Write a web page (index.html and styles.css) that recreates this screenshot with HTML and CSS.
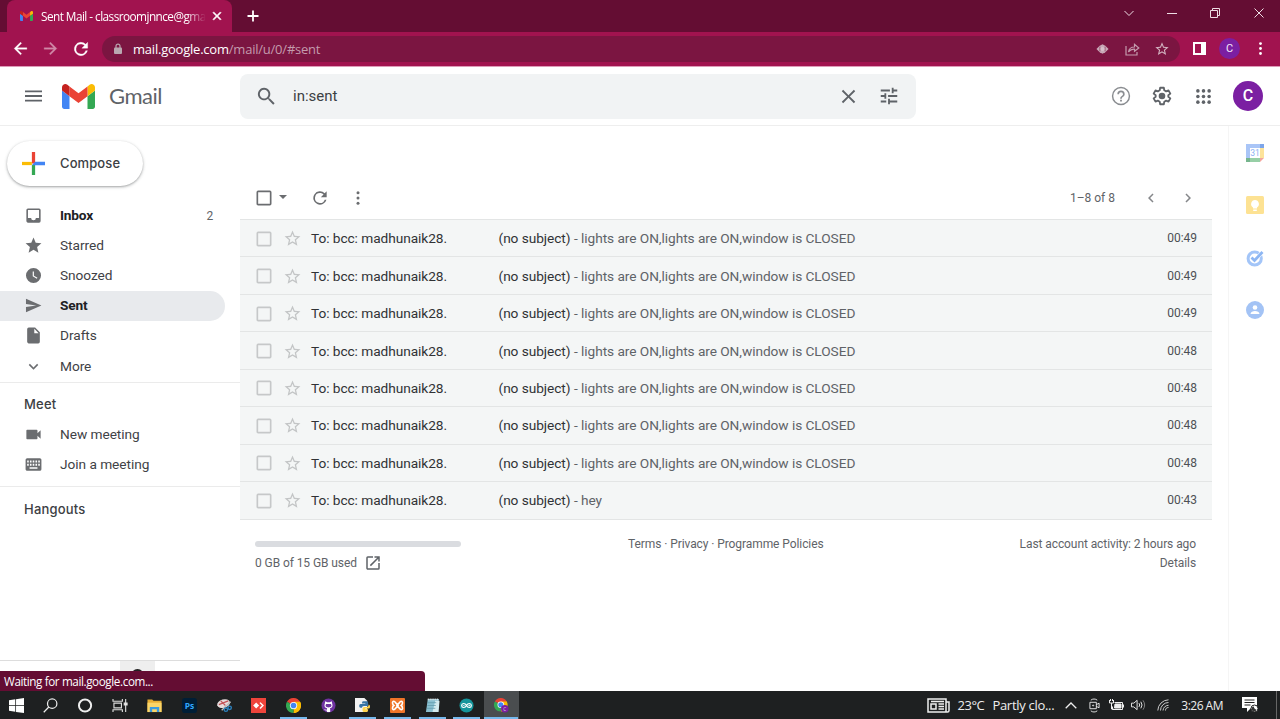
FILE: index.html
```html
<!DOCTYPE html>
<html lang="en">
<head>
<meta charset="utf-8">
<title>Sent Mail</title>
<link rel="stylesheet" href="styles.css">
</head>
<body>
<svg class="defs" aria-hidden="true">
  <symbol id="gmail" viewBox="52 42 88 66">
    <path fill="#4285f4" d="M58 108h14V74L52 59v43c0 3.300 2.700 6 6 6"/>
    <path fill="#34a853" d="M120 108h14c3.300 0 6-2.700 6-6V59l-20 15"/>
    <path fill="#fbbc04" d="M120 48v26l20-15v-8c0-7.400-8.500-11.700-14.400-7.200"/>
    <path fill="#ea4335" d="M72 74V48l24 18 24-18v26L96 92"/>
    <path fill="#c5221f" d="M52 51v8l20 15V48l-5.600-4.200C60.500 39.300 52 43.600 52 51"/>
  </symbol>
  <symbol id="close" viewBox="0 0 24 24"><path d="M19 6.400 17.600 5 12 10.600 6.400 5 5 6.400 10.600 12 5 17.600 6.400 19l5.600-5.600 5.600 5.600 1.400-1.400-5.600-5.600z"/></symbol>
  <symbol id="back" viewBox="0 0 24 24"><path d="M20 11H7.800l5.600-5.600L12 4l-8 8 8 8 1.400-1.400L7.800 13H20z"/></symbol>
  <symbol id="reload" viewBox="0 0 24 24"><path d="M17.650 6.350A8 8 0 1 0 19.730 14h-2.080A6 6 0 1 1 12 6c1.660 0 3.140.69 4.220 1.780L13 11h7V4z"/></symbol>
  <symbol id="star" viewBox="0 0 24 24"><path d="M22 9.240l-7.190-.62L12 2 9.190 8.630 2 9.240l5.460 4.730L5.820 21 12 17.270 18.180 21l-1.630-7.030zM12 15.400l-3.760 2.270 1-4.280-3.320-2.880 4.380-.38L12 6.100l1.710 4.040 4.380.38-3.320 2.880 1 4.280z"/></symbol>
  <symbol id="search" viewBox="0 0 24 24"><path d="M15.500 14h-.79l-.28-.27A6.500 6.500 0 1 0 13.730 14.430l.27.280v.79l5 4.990L20.490 19zm-6 0a4.500 4.500 0 1 1 0-9 4.500 4.500 0 0 1 0 9"/></symbol>
  <symbol id="more" viewBox="0 0 24 24"><circle cx="12" cy="5" r="2"/><circle cx="12" cy="12" r="2"/><circle cx="12" cy="19" r="2"/></symbol>
  <symbol id="left" viewBox="0 0 24 24"><path d="M15.400 7.400 14 6l-6 6 6 6 1.400-1.400L10.800 12z"/></symbol>
  <symbol id="down" viewBox="0 0 24 24"><path d="M16.600 8.600 12 13.200 7.400 8.600 6 10l6 6 6-6z"/></symbol>
  <symbol id="box" viewBox="0 0 24 24"><path d="M19 5v14H5V5zm0-2H5a2 2 0 0 0-2 2v14c0 1.100.9 2 2 2h14a2 2 0 0 0 2-2V5a2 2 0 0 0-2-2"/></symbol>
  <symbol id="chrome" viewBox="0 0 24 24">
    <path fill="#ea4335" d="M12 12 1.600 6A12 12 0 0 1 22.400 6z"/>
    <path fill="#fbbc04" d="M12 12 22.400 6A12 12 0 0 1 12 24z"/>
    <path fill="#34a853" d="M12 12v12A12 12 0 0 1 1.600 6z"/>
    <path fill="#fbbc04" d="M12 6h10.400A12 12 0 0 1 12 24l5-9z"/>
    <circle cx="12" cy="12" r="5.800" fill="#fff"/><circle cx="12" cy="12" r="4.500" fill="#4285f4"/>
  </symbol>
</svg>

<div class="screen">
  <header class="tabstrip">
    <div class="tab">
      <svg class="fav"><use href="#gmail"/></svg>
      <span class="tab-title">Sent Mail - classroomjnnce@gma</span>
      <svg class="tab-close"><use href="#close"/></svg>
    </div>
    <svg class="newtab" viewBox="0 0 12 12"><path d="M6 .5v11M.5 6h11" stroke="#fff" stroke-width="1.800"/></svg>
    <div class="winctl">
      <svg viewBox="0 0 12 12"><path d="M1.500 4 6 8.500 10.500 4"/></svg>
      <svg viewBox="0 0 12 12"><path d="M1 6.500h10"/></svg>
      <svg viewBox="0 0 12 12"><path d="M1.500 3.500h7v7h-7zM3.500 3.500v-2h7v7h-2"/></svg>
      <svg viewBox="0 0 12 12"><path d="m1.500 1.500 9 9m0-9-9 9"/></svg>
    </div>
  </header>

  <div class="navbar">
    <svg class="nav"><use href="#back"/></svg>
    <svg class="nav fwd"><use href="#back"/></svg>
    <svg class="nav rel"><use href="#reload"/></svg>
    <div class="omni">
      <svg class="lock" viewBox="0 0 8 12"><path d="M2 5V3.200a2 2 0 0 1 4 0V5" fill="none" stroke="#b9a8b0" stroke-width="1.200"/><rect y="4.500" width="8" height="6.500" rx="1" fill="#b9a8b0"/></svg>
      <span class="url"><b>mail.google.com</b>/mail/u/0/#sent</span>
      <svg class="eye" viewBox="0 0 14 12"><path d="M.5 6 4 2.500 7 .8l3 1.700L13.500 6 10 9.500l-3 1.700-3-1.700z" fill="#c9a9b7"/><path d="M4.200 3.500v5M9.800 3.500v5" stroke="#7b1541" stroke-width=".6"/><circle cx="7" cy="6" r="2.200" fill="#d8c0cb"/></svg>
      <svg class="share" viewBox="0 0 15 14"><path d="M1 4v9h11v-3M3.500 10c.5-3.500 2.500-5 6-5V2.300L13.800 6 9.500 9.300V7.200C7 7 5 8 3.500 10z" fill="none" stroke="#c49bad" stroke-width="1.200"/></svg>
      <svg class="ostar"><use href="#star"/></svg>
    </div>
    <svg class="panel" viewBox="0 0 13 13"><path d="M1 1h11v11H1z" fill="none" stroke="#fff" stroke-width="2"/><path d="M8 1h4v11H8z" fill="#fff"/></svg>
    <span class="mini">C</span>
    <svg class="kebab"><use href="#more"/></svg>
  </div>

  <div class="gheader">
    <svg class="burger" viewBox="0 0 18 12"><path d="M0 1h18M0 6h18M0 11h18" stroke="#5f6368" stroke-width="1.900"/></svg>
    <svg class="logo"><use href="#gmail"/></svg>
    <span class="word">Gmail</span>
    <div class="search">
      <svg class="mag"><use href="#search"/></svg>
      <span class="query">in:sent</span>
      <svg class="clear"><use href="#close"/></svg>
      <svg class="tune" viewBox="0 0 24 24"><path d="M3 17v2h6v-2zM3 5v2h10V5zm10 16v-2h8v-2h-8v-2h-2v6zM7 9v2H3v2h4v2h2V9zm14 4v-2H11v2zm-6-4h2V7h4V5h-4V3h-2z"/></svg>
    </div>
    <svg class="help" viewBox="0 0 24 24"><path d="M11 18h2v-2h-2zm1-16a10 10 0 1 0 0 20 10 10 0 0 0 0-20m0 18.400a8.400 8.400 0 1 1 0-16.800 8.400 8.400 0 0 1 0 16.800M12 6a4 4 0 0 0-4 4h1.800a2.200 2.200 0 0 1 4.400 0c0 2-3.100 1.800-3.100 5h1.800c0-2.200 3.100-2.500 3.100-5a4 4 0 0 0-4-4"/></svg>
    <svg class="gear" viewBox="0 0 24 24"><path fill="none" stroke="#5f6368" stroke-width="2" stroke-linejoin="round" d="M10 3h4l.5 2.800 2 1.100 2.600-1 2 3.500-2.200 1.700v1.800l2.200 1.700-2 3.500-2.600-1-2 1.100L14 21h-4l-.5-2.800-2-1.100-2.600 1-2-3.500 2.200-1.700v-1.800L2.900 9.400l2-3.500 2.600 1 2-1.100z"/><circle cx="12" cy="12" r="3.600"/></svg>
    <svg class="apps" viewBox="0 0 16 16"><circle cx="2" cy="2" r="1.900"/><circle cx="8" cy="2" r="1.900"/><circle cx="14" cy="2" r="1.900"/><circle cx="2" cy="8" r="1.900"/><circle cx="8" cy="8" r="1.900"/><circle cx="14" cy="8" r="1.900"/><circle cx="2" cy="14" r="1.900"/><circle cx="8" cy="14" r="1.900"/><circle cx="14" cy="14" r="1.900"/></svg>
    <span class="avatar">C</span>
  </div>

  <div class="body">
    <aside class="side">
      <div class="compose">
        <svg viewBox="0 0 24 24"><path fill="#ea4335" d="M10.300 0h3.400v12h-3.400z"/><path fill="#fbbc04" d="M0 10.300h10.300v3.400H0z"/><path fill="#34a853" d="M10.300 13.700 13.700 12v12h-3.400z"/><path fill="#4285f4" d="M13.700 10.300H24v3.400H10.300z"/></svg>
        <span>Compose</span>
      </div>
      <nav class="folders">
        <div class="item bold"><svg viewBox="0 0 24 24"><path d="M19 3H5a2 2 0 0 0-2 2v14c0 1.100.9 2 2 2h14a2 2 0 0 0 2-2V5a2 2 0 0 0-2-2m0 12h-4a3 3 0 0 1-6 0H5V5h14z"/></svg><span>Inbox</span><i>2</i></div>
        <div class="item"><svg viewBox="0 0 24 24"><path d="M12 17.270 18.180 21l-1.640-7.030L22 9.240l-7.190-.61L12 2 9.190 8.630 2 9.240l5.460 4.730L5.820 21z"/></svg><span>Starred</span></div>
        <div class="item"><svg viewBox="0 0 24 24"><path d="M12 2.500a9.500 9.500 0 1 0 0 19 9.500 9.500 0 0 0 0-19m4.200 13.700L11 13V7h1.500v5.200l4.500 2.700z"/></svg><span>Snoozed</span></div>
        <div class="item bold active"><svg viewBox="0 0 24 24"><path d="M2.500 20.500 22 12 2.500 3.500V10l13 2-13 2z"/></svg><span>Sent</span></div>
        <div class="item"><svg viewBox="0 0 24 24"><path d="M14 2H6a2 2 0 0 0-2 2v16c0 1.100.9 2 2 2h12a2 2 0 0 0 2-2V8zm-1 7V3.500L18.500 9z"/></svg><span>Drafts</span></div>
        <div class="item last"><svg><use href="#down"/></svg><span>More</span></div>
      </nav>
      <section class="meet">
        <h2>Meet</h2>
        <div class="item"><svg viewBox="0 0 24 24"><path d="M17 10.500V7a1 1 0 0 0-1-1H4a1 1 0 0 0-1 1v10c0 .6.400 1 1 1h12a1 1 0 0 0 1-1v-3.500l4 4v-11z"/></svg><span>New meeting</span></div>
        <div class="item"><svg viewBox="0 0 24 24"><path d="M20 4H4a2 2 0 0 0-2 2v12c0 1.100.9 2 2 2h16a2 2 0 0 0 2-2V6a2 2 0 0 0-2-2"/><path fill="#fff" d="M4 7h2v2.500H4zm3.500 0h2v2.500h-2zM11 7h2v2.500h-2zm3.500 0h2v2.500h-2zM18 7h2v2.500h-2zM4 11h2v2.500H4zm3.500 0h2v2.500h-2zM11 11h2v2.500h-2zm3.500 0h2v2.500h-2zM18 11h2v2.500h-2zM7 15.500h10v2H7z"/></svg><span>Join a meeting</span></div>
      </section>
      <section class="hang"><h2>Hangouts</h2></section>
      <div class="dock"><span class="dock-tab"><i></i></span></div>
    </aside>

    <main class="main">
      <div class="toolbar">
        <svg class="selall"><use href="#box"/></svg>
        <span class="caret"></span>
        <svg class="refresh"><use href="#reload"/></svg>
        <svg class="opts"><use href="#more"/></svg>
        <span class="count">1–8 of 8</span>
        <svg class="pg"><use href="#left"/></svg>
        <svg class="pg next"><use href="#left"/></svg>
      </div>
      <div class="list">
        <div class="row"><svg class="cb"><use href="#box"/></svg><svg class="st"><use href="#star"/></svg><span class="to">To: bcc: madhunaik28.</span><span class="subj">(no subject)</span><span class="snip">- lights are ON,lights are ON,window is CLOSED</span><time>00:49</time></div>
        <div class="row"><svg class="cb"><use href="#box"/></svg><svg class="st"><use href="#star"/></svg><span class="to">To: bcc: madhunaik28.</span><span class="subj">(no subject)</span><span class="snip">- lights are ON,lights are ON,window is CLOSED</span><time>00:49</time></div>
        <div class="row"><svg class="cb"><use href="#box"/></svg><svg class="st"><use href="#star"/></svg><span class="to">To: bcc: madhunaik28.</span><span class="subj">(no subject)</span><span class="snip">- lights are ON,lights are ON,window is CLOSED</span><time>00:49</time></div>
        <div class="row"><svg class="cb"><use href="#box"/></svg><svg class="st"><use href="#star"/></svg><span class="to">To: bcc: madhunaik28.</span><span class="subj">(no subject)</span><span class="snip">- lights are ON,lights are ON,window is CLOSED</span><time>00:48</time></div>
        <div class="row"><svg class="cb"><use href="#box"/></svg><svg class="st"><use href="#star"/></svg><span class="to">To: bcc: madhunaik28.</span><span class="subj">(no subject)</span><span class="snip">- lights are ON,lights are ON,window is CLOSED</span><time>00:48</time></div>
        <div class="row"><svg class="cb"><use href="#box"/></svg><svg class="st"><use href="#star"/></svg><span class="to">To: bcc: madhunaik28.</span><span class="subj">(no subject)</span><span class="snip">- lights are ON,lights are ON,window is CLOSED</span><time>00:48</time></div>
        <div class="row"><svg class="cb"><use href="#box"/></svg><svg class="st"><use href="#star"/></svg><span class="to">To: bcc: madhunaik28.</span><span class="subj">(no subject)</span><span class="snip">- lights are ON,lights are ON,window is CLOSED</span><time>00:48</time></div>
        <div class="row"><svg class="cb"><use href="#box"/></svg><svg class="st"><use href="#star"/></svg><span class="to">To: bcc: madhunaik28.</span><span class="subj">(no subject)</span><span class="snip">- hey</span><time>00:43</time></div>
      </div>
      <footer class="foot">
        <div class="quota"><div class="bar"></div><div class="used"><span>0 GB of 15 GB used</span><svg viewBox="0 0 24 24"><path d="M19 19H5V5h7V3H5a2 2 0 0 0-2 2v14c0 1.100.9 2 2 2h14a2 2 0 0 0 2-2v-7h-2zM14 3v2h3.600l-9.800 9.800 1.400 1.400L19 6.400V10h2V3z"/></svg></div></div>
        <div class="terms">Terms · Privacy · Programme Policies</div>
        <div class="activity"><span>Last account activity: 2 hours ago</span><span>Details</span></div>
      </footer>
    </main>

    <aside class="rail">
      <svg viewBox="0 0 18 18"><path fill="#a9c5f7" d="M0 0h14v4H4v10H0z"/><path fill="#7da5ea" d="M14 0h4v4h-4z"/><path fill="#fde39a" d="M14 4h4v10h-4z"/><path fill="#97cfa6" d="M4 14h10v4H4z"/><path fill="#76b58d" d="M0 14h4v4H0z"/><path fill="#f3a59e" d="M14 14h4l-4 4z"/><text x="9" y="12.300" text-anchor="middle" font-size="8.500" fill="#8bb1f3">31</text></svg>
      <svg viewBox="0 0 18 18"><rect width="18" height="18" rx="1.500" fill="#fde293"/><path fill="#fff" d="M9 4a4 4 0 0 0-2 7.400V12.500h4v-1.100A4 4 0 0 0 9 4M7.200 13.500h3.600V15H7.200z"/></svg>
      <svg viewBox="0 0 18 18"><circle cx="8.700" cy="9.500" r="6.600" fill="none" stroke="#a3c5f8" stroke-width="3"/><path d="m5.500 8.500 3 3L16.500 3" fill="none" stroke="#fff" stroke-width="3.800"/><path d="m5.500 8.500 3 3L16.500 3" fill="none" stroke="#8db6f3" stroke-width="2.800"/></svg>
      <svg viewBox="0 0 18 18"><circle cx="9" cy="9" r="9" fill="#a3c3f5"/><circle cx="9" cy="6.500" r="2.300" fill="#fff"/><path fill="#fff" d="M4.500 13c0-4 9-4 9 0z"/></svg>
    </aside>
  </div>

  <div class="status">Waiting for mail.google.com...</div>

  <div class="taskbar">
    <div class="pins">
      <span><svg viewBox="0 0 16 16"><path fill="#fff" d="M0 2.300 6.700 1.300v6.300H0zM7.500 1.200 16 0v7.600H7.500zM0 8.400h6.700v6.300L0 13.700zM7.500 8.400H16V16l-8.500-1.200z"/></svg></span>
      <span><svg viewBox="0 0 16 16" fill="none" stroke="#eee" stroke-width="1.300"><circle cx="9.800" cy="6" r="5"/><path d="M6.200 9.600.8 15.200"/></svg></span>
      <span><svg viewBox="0 0 16 16"><circle cx="7.500" cy="8" r="6.500" fill="none" stroke="#eee" stroke-width="2.100"/></svg></span>
      <span><svg viewBox="0 0 16 16" fill="none" stroke="#ddd" stroke-width="1.200"><path d="M0 1v2.500h10V1M0 15v-2.500h10V15M1 5.500h8v5H1zM13.500 1v14"/><path d="M12 5.500h3v2h-3z" fill="#fff"/></svg></span>
      <span><svg viewBox="0 0 16 16"><path fill="#e8ae35" d="M.5 1.500h5L7 3h8.500v12H.5z"/><path fill="#fbd568" d="M.5 5h15v10H.5z"/><path fill="#3b9be0" d="M3 15V9.500h10V15h-2.500v-3h-5v3z"/></svg></span>
      <span><svg viewBox="0 0 16 16"><rect width="16" height="16" rx="3" fill="#001e36"/><text x="8" y="11.300" text-anchor="middle" font-size="9" font-weight="700" fill="#31a8ff">Ps</text></svg></span>
      <span><svg viewBox="0 0 16 16"><ellipse cx="7" cy="6" rx="7" ry="4.500" fill="#e7dcdc" transform="rotate(-15 7 6)"/><path d="m2 7 10-4M4 3l5 5" stroke="#c55358" stroke-width="1.300"/><path d="M5 13 14.500 4" stroke="#bbb" stroke-width="1.500"/><circle cx="9.500" cy="12.500" r="1.800" fill="none" stroke="#2c80bd" stroke-width="1.500"/><circle cx="13.500" cy="10.500" r="1.800" fill="none" stroke="#2c80bd" stroke-width="1.500"/></svg></span>
      <span><svg viewBox="0 0 16 16"><path fill="#ef443b" d="M0 0h16v16H0z"/><path fill="#fff" d="M5.500 4.800 8.700 8l-3.200 3.200L2.300 8zM9 5.300l1.200-.9L13.800 8l-3.600 3.600-1.200-.9L11.700 8z"/></svg></span>
      <span class="open"><svg><use href="#chrome"/></svg></span>
      <span><svg viewBox="0 0 16 16"><circle cx="8" cy="8" r="7.500" fill="#6f32a0"/><path fill="#fff" d="M4.500 3.500 6.600 4.500h2.800l2.100-1 .4 2.300c1 2.500 0 4.700-2.400 5.200l.3 1V15H6.300v-1.700c-1.700.2-2-.7-3-1.600 1.300-.1 1.500 1.200 3 .7l.2-1.400C4.100 10.500 3.100 8.300 4.100 5.800z"/><path fill="#6f32a0" d="M5.500 6.500h5c1.500 2 .5 3.500-2.500 3.500s-4-1.500-2.500-3.500"/></svg></span>
      <span class="open"><svg viewBox="0 0 16 16"><path fill="#f3f3f3" d="M0 0h10l3 3v12H0z"/><path fill="#3874a5" d="M9 3.500h3.500c1.500 0 1.500 1 1.500 2v3H9.500c-1.500 0-2 1-2 2H6c-2 0-2-4 0-4h5v-.7H7.500C7.500 4 8 3.500 9 3.500"/><path fill="#ffd44c" d="M14.500 6.800c2 0 2 4.500 0 4.500h-3.700v.7H14c0 2.500-.5 3-3 3s-3-.5-3-2.500c0-2 .5-3 2-3h2.500c1.500 0 2-1 2-2.700"/></svg></span>
      <span class="open"><svg viewBox="0 0 16 16"><rect width="16" height="16" rx="1" fill="#ef7529"/><path d="M4 3.500c2 0 2 3 4 3s2-3 4-3 1.500 3.500 0 4.500c1.500 1 2 4.500 0 4.500s-2-3-4-3-2 3-4 3-1.500-3.500 0-4.500c-1.500-1-2-4.500 0-4.500M6.500 8h3" fill="none" stroke="#fff" stroke-width="1.700"/></svg></span>
      <span class="open"><svg viewBox="0 0 16 16"><path fill="#89bfd0" d="M3 1h12l-2 14H1z"/><path fill="#d4ebef" d="M11 3h4.500l-1 12H8z"/><path d="M3 5h9M2.500 8h9M2 11h9" stroke="#609aaa" stroke-width=".8"/><path d="M3 1.500h12" stroke="#eee" stroke-width="2" stroke-dasharray="1"/></svg></span>
      <span class="open"><svg viewBox="0 0 16 16"><circle cx="8" cy="8" r="7.500" fill="#15959b"/><path d="M8 8C6.500 5 2.800 5.300 2.800 8S6.500 11 8 8s5.200-2.700 5.200 0S9.500 11 8 8z" fill="none" stroke="#fff" stroke-width="1.200"/><path d="M4 8h2M10 8h2m-1-1v2" stroke="#fff" stroke-width=".7"/></svg></span>
      <span class="open current"><svg viewBox="0 0 16 16"><use href="#chrome" width="14.500" height="14.500"/><circle cx="11.500" cy="11.500" r="4" fill="#7b1fa2"/><text x="11.500" y="13.500" text-anchor="middle" font-size="5" fill="#ddd">C</text></svg></span>
    </div>
    <div class="tray">
      <svg class="news" viewBox="0 0 23 15" fill="none" stroke="#eee" stroke-width="1.500"><path d="M1 1h18v13H1zM19 4h3v8.500c0 1-.5 1.500-1.500 1.500H18M4 6h5v5H4zM11.500 6H17M11.500 8.500H17M11.500 11H17M4 3.500h13"/></svg>
      <span class="temp">23°C</span><span class="cloud">Partly clo...</span>
      <svg class="up" viewBox="0 0 12 7"><path d="M.7 6.300 6 1l5.300 5.300" fill="none" stroke="#eee" stroke-width="1.300"/></svg>
      <svg class="cam" viewBox="0 0 12 16" fill="none" stroke="#eee"><path d="M1 4.500h7v7H1zM8 7l3-1.500v5L8 9M2 2.200C4 .5 7 .5 9 2.200M2 13.800c2 1.700 5 1.700 7 0"/><circle cx="4.500" cy="8" r=".6"/></svg>
      <svg class="bat" viewBox="0 0 15 12" fill="none" stroke="#eee"><path d="M5.500 3.500h8v7h-10v-3M.5 1v3h4V1M2.500 4v6h2M1.500 0v2M3.500 0v2M14.500 5.500v3"/><path d="M6 5h6v4H5.500z" fill="#eee"/></svg>
      <svg class="vol" viewBox="0 0 16 12" fill="none" stroke="#eee"><path d="M.5 4v4H3l3.500 3V1L3 4zM8.500 4q1.500 2 0 4M10.500 2.500q2.500 3.500 0 7"/><path d="M12.800 1q3.500 5 0 10" stroke="#888"/></svg>
      <svg class="wifi" viewBox="0 0 12 12" fill="none" stroke="#ccc"><path d="M.8 11.500A11 11 0 0 1 11.500.8M3.500 11.500a8 8 0 0 1 8-8M6 11.500a5.500 5.500 0 0 1 5.500-5.200M8.500 11.500c0-2 1-3 3-3"/></svg>
      <span class="clock">3:26 AM</span>
      <svg class="note" viewBox="0 0 16 16"><path fill="#fff" d="M0 0h15v11H9l-4 4v-4H0z"/><path d="M2.500 3h10M2.500 5.500h10M2.500 8h6" stroke="#222"/><circle cx="12.500" cy="11.500" r="3.500" fill="#fff" stroke="#222"/><path d="M12 9.500a2.500 2.500 0 1 0 2.500 3A2.500 2.500 0 0 1 12 9.500" fill="#333"/></svg>
      <span class="edge"></span>
    </div>
  </div>
</div>
</body>
</html>
```
FILE: styles.css
```css
* { box-sizing: border-box; }
body { margin: 0; background: #fff; color: #202124; font-family: Roboto, "Liberation Sans", sans-serif; font-size: 13.700px; }
svg { display: block; flex: none; overflow: visible; }
span, time { white-space: nowrap; }
.defs { position: absolute; width: 0; height: 0; }
.screen { position: relative; display: flex; flex-direction: column; width: 1280px; height: 719px; overflow: hidden; }

/* Browser chrome */
.tabstrip { display: flex; align-items: center; flex: none; height: 32px; background: #640d33; font-family: "Open Sans", "Noto Sans", sans-serif; }
.tab { display: flex; align-items: center; width: 225px; height: 32px; margin-left: 7px; padding: 0 0 1px 13px; background: #a1134f; border-radius: 8px 8px 0 0; }
.fav { width: 13px; height: 10px; }
.tab-title { width: 165px; margin-left: 8px; color: #fff; font-size: 11.800px; letter-spacing: -0.550px; -webkit-mask-image: linear-gradient(90deg, #000 88%, transparent); mask-image: linear-gradient(90deg, #000 88%, transparent); }
.tab-close { width: 14px; height: 14px; margin-left: 4px; fill: #fff; stroke: #fff; }
.newtab { width: 12px; height: 12px; margin-left: 15px; }
.winctl { display: flex; gap: 31.300px; margin: -6px 15.500px 0 auto; }
.winctl svg { width: 12px; height: 12px; fill: none; stroke: #eedde5; }
.navbar { display: flex; align-items: center; flex: none; height: 34px; padding: 0 11px 1px; background: #a1134f; font-family: "Open Sans", "Noto Sans", sans-serif; }
.nav { width: 19px; height: 19px; fill: #fff; stroke: #fff; stroke-width: .4; }
.nav.fwd { margin-left: 11px; transform: scaleX(-1); opacity: .5; }
.nav.rel { width: 20px; height: 20px; margin-left: 11px; }
.omni { display: flex; align-items: center; width: 1078px; height: 26px; margin-left: 11px; padding-left: 12px; border-radius: 13px; background: #7b1541; }
.lock { width: 8px; height: 12px; }
.url { flex: 1; margin-left: 11px; color: #c49bad; font-size: 13px; letter-spacing: -0.220px; }
.url b { color: #fff; font-weight: 400; }
.eye { width: 13px; height: 12px; }
.share { width: 15px; height: 14px; margin-left: 16px; }
.ostar { width: 16px; height: 16px; margin: 0 10px 0 14px; fill: #d3b5c2; }
.panel { width: 13px; height: 13px; margin-left: 13px; }
.mini { width: 21px; height: 21px; margin-left: 13px; border-radius: 50%; background: #7b1fa2; color: #f4e8f8; font: 11px/21px Roboto, sans-serif; text-align: center; }
.kebab { width: 17px; height: 17px; margin-left: 12px; fill: #fff; }

/* Gmail header */
.gheader { display: flex; align-items: center; flex: none; height: 60px; padding-left: 25px; border-top: 1px solid #dd9bb8; border-bottom: 1px solid #eee; }
.burger { width: 17px; height: 12px; }
.logo { width: 33px; height: 25px; margin-left: 20px; }
.word { width: 131px; margin-left: 14px; color: #5f6368; font: 22px/30px Lato, sans-serif; letter-spacing: -.500px; }
.search { display: flex; align-items: center; width: 676px; height: 45px; padding-left: 15px; border-radius: 8px; background: #f1f3f4; fill: #5f6368; }
.mag { width: 23px; height: 23px; }
.query { flex: 1; margin-left: 15px; color: #3c4043; font-size: 15px; }
.clear { width: 23px; height: 23px; }
.tune { width: 22px; height: 22px; margin: 0 16px 0 18px; }
.help { width: 22px; height: 22px; margin-left: 194px; fill: #8a8d91; }
.gear { width: 22px; height: 22px; margin-left: 19px; fill: #5f6368; }
.apps { width: 15px; height: 15px; margin-left: 23px; fill: #5f6368; }
.avatar { width: 30px; height: 30px; margin-left: 22px; border-radius: 50%; background: #7b1fa2; color: #fff; font-size: 16px; font-weight: 500; line-height: 30px; text-align: center; }

/* Sidebar */
.body { display: flex; flex: none; height: 565px; }
.side { display: flex; flex-direction: column; flex: none; width: 240px; }
.compose { display: flex; align-items: center; flex: none; width: 136px; height: 45px; margin: 15px 0 15px 7px; padding-left: 15px; border-radius: 23px; box-shadow: 0 1px 2px rgba(60,64,67,.35), 0 1px 3px 1px rgba(60,64,67,.12); color: #3c4043; font: 500 13px/18px Inter, sans-serif; letter-spacing: .1px; }
.compose svg { width: 23px; height: 23px; margin-right: 15px; }
.compose span { padding-bottom: 2px; }
.folders { flex: none; height: 182px; border-bottom: 1px solid #ebebeb; }
.item { display: flex; align-items: center; width: 225px; height: 30px; padding: 0 0 1px 24px; color: #3f4246; letter-spacing: -.050px; }
.item span { padding-bottom: 1px; }
.item svg { width: 19px; height: 19px; margin-right: 17px; fill: #6b6d70; }
.item i { margin: 1px 12px 0 auto; color: #5f6368; font-size: 12px; font-style: normal; font-weight: 400; }
.item.bold { color: #202124; font-weight: 700; letter-spacing: -.200px; }
.item.active { border-radius: 0 15px 15px 0; background: #e8eaed; }
.item.last { margin-top: 1px; }
h2 { margin: 0; padding-left: 24px; color: #3c4043; font: 500 13px/20px Inter, sans-serif; letter-spacing: .200px; }
.meet { flex: none; height: 104px; padding-top: 11px; border-bottom: 1px solid #ebebeb; }
.meet h2 { margin-bottom: 6px; }
.hang { flex: 1; padding-top: 12px; }
.dock { flex: none; height: 31px; border-top: 1px solid #ddd; }
.dock-tab { display: block; width: 35px; height: 30px; margin-left: 120px; padding: 8px 11px; background: #eee; }
.dock-tab i { display: block; width: 13px; height: 13px; border-radius: 50%; background: #222; }

/* Message list */
.main { flex: none; width: 972px; padding-top: 53px; }
.toolbar { display: flex; align-items: center; height: 40px; padding: 0 15px; fill: #6b6d70; }
.selall { width: 20px; height: 20px; margin-top: -3px; margin-left: -1px; }
.caret { margin: -4px 0 0 5px; border: 4px solid transparent; border-top-color: #6b6d70; border-bottom: 0; }
.refresh { width: 20px; height: 20px; margin: -3px 0 0 23px; }
.opts { width: 18px; height: 18px; margin: -3px 0 0 19px; }
.count { margin: -3px 27px 0 auto; color: #5f6368; font-size: 12px; letter-spacing: 0; }
.pg { width: 18px; height: 18px; margin-top: -3px; fill: #85878a; }
.pg.next { margin-left: 19px; transform: scaleX(-1); }
.row { display: flex; align-items: center; height: 37.450px; padding: 0 15px; border-top: 1px solid #e3e5e5; background: #f4f6f6; letter-spacing: -.060px; }
.row:last-child { height: 38.500px; border-bottom: 1px solid #e3e5e5; }
.cb { width: 20px; height: 20px; margin: 1px 0 0 -1px; fill: #c6c8c9; }
.st { width: 19px; height: 19px; margin: 1px 0 0 9px; fill: #c3c5c6; }
.to { width: 187.500px; margin-left: 9px; color: #303235; }
.subj { color: #303235; }
.snip { margin-left: 3.500px; color: #5f6368; }
.row time { margin-left: auto; color: #4d5054; font-size: 12px; letter-spacing: -.050px; }
.foot { display: flex; padding: 15px 16px 0 15px; color: #5f6368; font-size: 12px; line-height: 19px; letter-spacing: -.080px; }
.quota { width: 373px; }
.bar { width: 206px; height: 6px; margin: 6px 0 7px; border-radius: 3px; background: #dadce0; }
.used { display: flex; align-items: center; }
.used svg { width: 18px; height: 18px; margin-left: 7px; fill: #5f6368; }
.activity { display: flex; flex-direction: column; align-items: flex-end; margin-left: auto; }
.rail { display: flex; flex-direction: column; align-items: center; gap: 34.500px; width: 52px; margin-left: auto; padding-top: 17.500px; border-left: 1px solid #f5f5f5; }
.rail svg { width: 18px; height: 18px; }

/* Link status bubble floats over the page */
.status { position: absolute; left: 0; bottom: 28px; width: 425px; height: 20px; padding-left: 4px; border-radius: 0 4px 0 0; background: #640d33; color: #fff; font: 11.700px/21px "Open Sans", sans-serif; letter-spacing: -.400px; }

/* Taskbar */
.taskbar { display: flex; flex: none; height: 28px; background: #1e2021; color: #eee; font-family: "Open Sans", sans-serif; font-size: 12px; }
.pins { display: flex; margin-left: -1px; }
.pins span { display: flex; align-items: center; justify-content: center; width: 34.650px; height: 28px; }
.pins svg { width: 15px; height: 15px; }
.pins .open { background: linear-gradient(#76b9ed, #76b9ed) center bottom / 27px 2px no-repeat; }
.pins .current { background: linear-gradient(#76b9ed, #76b9ed) center bottom / 34px 2px no-repeat, #4a4d4f; }
.tray { display: flex; align-items: center; margin-left: auto; }
.news { width: 23px; height: 15px; }
.temp { margin-left: 7px; font-size: 13px; letter-spacing: -.4px; }
.cloud { margin-left: 8px; font-size: 13px; letter-spacing: -.300px; }
.up { width: 12px; height: 7px; margin-left: 11px; }
.cam { width: 11px; height: 15px; margin-left: 12px; }
.bat { width: 15px; height: 12px; margin-left: 9px; }
.vol { width: 15px; height: 12px; margin-left: 7px; }
.wifi { width: 12px; height: 12px; margin-left: 11px; }
.clock { margin-left: 12px; letter-spacing: -.5px; }
.note { width: 16px; height: 16px; margin-left: 19px; }
.edge { width: 1px; height: 28px; margin: 0 3px 0 18px; background: #666; }
```
